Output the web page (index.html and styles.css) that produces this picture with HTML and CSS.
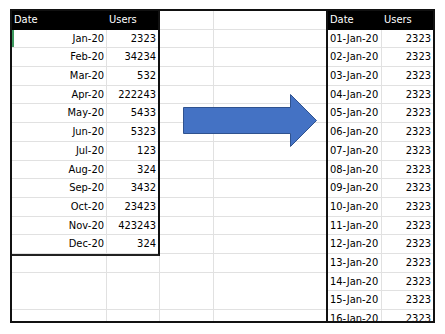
FILE: index.html
```html
<!DOCTYPE html>
<html>
<head>
<meta charset="utf-8">
<link rel="stylesheet" href="styles.css">
</head>
<body>
<div class="frame">
  <div class="left">
    <div class="tbl left-tbl">
      <div class="hd">Date</div><div class="hd">Users</div>
      <div class="c a sel">Jan-20</div><div class="c b">2323</div>
      <div class="c a">Feb-20</div><div class="c b">34234</div>
      <div class="c a">Mar-20</div><div class="c b">532</div>
      <div class="c a">Apr-20</div><div class="c b">222243</div>
      <div class="c a">May-20</div><div class="c b">5433</div>
      <div class="c a">Jun-20</div><div class="c b">5323</div>
      <div class="c a">Jul-20</div><div class="c b">123</div>
      <div class="c a">Aug-20</div><div class="c b">324</div>
      <div class="c a">Sep-20</div><div class="c b">3432</div>
      <div class="c a">Oct-20</div><div class="c b">23423</div>
      <div class="c a">Nov-20</div><div class="c b">423243</div>
      <div class="c a">Dec-20</div><div class="c b">324</div>
    </div>
    <div class="filler"><div class="fa"></div><div class="fb"></div></div>
  </div>
  <div class="colc"></div>
  <div class="cold"></div>
  <div class="tbl right-tbl">
    <div class="hd">Date</div><div class="hd">Users</div>
    <div class="c l">01-Jan-20</div><div class="c b">2323</div>
    <div class="c l">02-Jan-20</div><div class="c b">2323</div>
    <div class="c l">03-Jan-20</div><div class="c b">2323</div>
    <div class="c l">04-Jan-20</div><div class="c b">2323</div>
    <div class="c l">05-Jan-20</div><div class="c b">2323</div>
    <div class="c l">06-Jan-20</div><div class="c b">2323</div>
    <div class="c l">07-Jan-20</div><div class="c b">2323</div>
    <div class="c l">08-Jan-20</div><div class="c b">2323</div>
    <div class="c l">09-Jan-20</div><div class="c b">2323</div>
    <div class="c l">10-Jan-20</div><div class="c b">2323</div>
    <div class="c l">11-Jan-20</div><div class="c b">2323</div>
    <div class="c l">12-Jan-20</div><div class="c b">2323</div>
    <div class="c l">13-Jan-20</div><div class="c b">2323</div>
    <div class="c l">14-Jan-20</div><div class="c b">2323</div>
    <div class="c l">15-Jan-20</div><div class="c b">2323</div>
    <div class="c l">16-Jan-20</div><div class="c b">2323</div>
  </div>
  <svg class="arrow" width="140" height="56" viewBox="0 0 140 56">
    <polygon points="1.5,14.5 108.5,14.5 108.5,1.5 134.5,27.5 108.5,53.5 108.5,40.5 1.5,40.5" fill="#4472C4" stroke="#2F528F" stroke-width="1"/>
  </svg>
</div>
</body>
</html>
```

FILE: styles.css
```css
html, body {
  margin: 0;
  padding: 0;
  background: #ffffff;
}
body {
  font-family: "DejaVu Sans Condensed", "DejaVu Sans", sans-serif;
  font-stretch: condensed;
  font-size: 11px;
  color: #000;
}
.frame {
  position: relative;
  margin: 9px 0 0 10px;
  width: 421px;
  height: 310px;
  border: 2px solid #111;
  display: flex;
  overflow: hidden;
  background: repeating-linear-gradient(to bottom, transparent 0, transparent 17.7px, #e1e1e1 17.7px, #e1e1e1 18.7px);
}
.left {
  width: 148px;
  display: flex;
  flex-direction: column;
  flex: none;
}
.tbl {
  display: grid;
  grid-auto-rows: 18.7px;
  background: #fff;
}
.left-tbl {
  grid-template-columns: 95px 51px;
  border-right: 2px solid #111;
  border-bottom: 2px solid #222;
}
.hd {
  background: #000;
  color: #fff;
  line-height: 18.7px;
  padding-left: 2px;
}
.c {
  line-height: 17.7px;
  border-bottom: 1px solid #e1e1e1;
  padding: 0 2px;
  white-space: nowrap;
  overflow: hidden;
}
.a {
  text-align: right;
  border-right: 1px solid #e1e1e1;
  position: relative;
}
.b {
  text-align: right;
}
.l {
  text-align: left;
  border-right: 1px solid #e1e1e1;
}
.sel::before {
  content: "";
  position: absolute;
  left: 0;
  top: 0;
  width: 2px;
  height: 18px;
  background: #3c9a5f;
}
.filler {
  flex: 1;
  display: flex;
}
.fa {
  width: 94px;
  border-right: 1px solid #e1e1e1;
}
.fb {
  width: 52px;
  border-right: 1px solid #e1e1e1;
}
.colc {
  width: 53px;
  flex: none;
  border-right: 1px solid #e1e1e1;
}
.cold {
  flex: 1;
}
.right-tbl {
  width: 105px;
  flex: none;
  grid-template-columns: 54px 51px;
  border-left: 2px solid #111;
  align-content: start;
}
.arrow {
  position: absolute;
  left: 170px;
  top: 82px;
}
```
